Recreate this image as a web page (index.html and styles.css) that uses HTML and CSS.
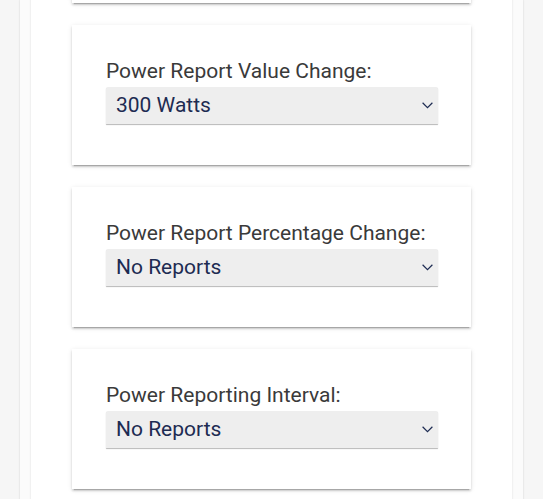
FILE: index.html
```html
<!DOCTYPE html>
<html lang="en">
<head>
<meta charset="utf-8">
<title>Power Reporting Settings</title>
<link rel="stylesheet" href="styles.css">
</head>
<body>
<div class="page">
  <div class="panel">
    <div class="content">
      <div class="cards">
        <section class="card card-partial"></section>
        <section class="card">
          <label class="field-label">Power Report Value Change:</label>
          <div class="select">
            <span class="select-value">300 Watts</span>
            <svg class="chevron" viewBox="0 0 11 7" width="11" height="7"><polyline points="0.6,0.8 5.5,5.6 10.4,0.8"/></svg>
          </div>
        </section>
        <section class="card">
          <label class="field-label">Power Report Percentage Change:</label>
          <div class="select">
            <span class="select-value">No Reports</span>
            <svg class="chevron" viewBox="0 0 11 7" width="11" height="7"><polyline points="0.6,0.8 5.5,5.6 10.4,0.8"/></svg>
          </div>
        </section>
        <section class="card">
          <label class="field-label">Power Reporting Interval:</label>
          <div class="select">
            <span class="select-value">No Reports</span>
            <svg class="chevron" viewBox="0 0 11 7" width="11" height="7"><polyline points="0.6,0.8 5.5,5.6 10.4,0.8"/></svg>
          </div>
        </section>
        <section class="card"></section>
      </div>
    </div>
  </div>
</div>
</body>
</html>
```

FILE: styles.css
```css
html, body {
  margin: 0;
  padding: 0;
  height: 100%;
  overflow: hidden;
  background: #f6f6f6;
  font-family: Roboto, "Noto Sans", "Liberation Sans", sans-serif;
}

.page {
  display: flex;
  justify-content: flex-start;
  padding-left: 20px;
  min-height: 100vh;
}

.panel {
  width: 503px;
  box-sizing: border-box;
  background: #fbfbfb;
  padding: 0 11px;
  box-shadow: 0 0 1px rgba(0, 0, 0, 0.18), 0 0 3px rgba(0, 0, 0, 0.06);
  min-height: 100vh;
}

.content {
  background: #ffffff;
  padding: 0 41px;
  box-shadow: 0 0 1px rgba(0, 0, 0, 0.14), 0 0 3px rgba(0, 0, 0, 0.05);
  min-height: 100vh;
}

.cards {
  display: flex;
  flex-direction: column;
  gap: 22px;
  margin-top: -137px;
}

.card {
  background: #ffffff;
  height: 140px;
  box-sizing: border-box;
  padding: 34px 33px 0 34px;
  box-shadow: 0 2px 2px rgba(0, 0, 0, 0.14), 0 1px 5px rgba(0, 0, 0, 0.10), 0 3px 1px -2px rgba(0, 0, 0, 0.2);
  display: flex;
  flex-direction: column;
}

.field-label {
  display: block;
  font-size: 21px;
  line-height: 24px;
  color: #3a3a3a;
}

.select {
  margin-top: 4px;
  height: 37px;
  box-sizing: border-box;
  padding: 6px 5px 7px 10px;
  background: #eeeeee;
  border-radius: 2px 2px 0 0;
  box-shadow: 0 1px 1px rgba(0, 0, 0, 0.28);
  display: flex;
  align-items: center;
  justify-content: space-between;
}

.select-value {
  font-size: 21px;
  line-height: 24px;
  color: #1d2b52;
}

.chevron {
  fill: none;
  stroke: #1d2b52;
  stroke-width: 1.2;
  margin-top: 1px;
}
```
